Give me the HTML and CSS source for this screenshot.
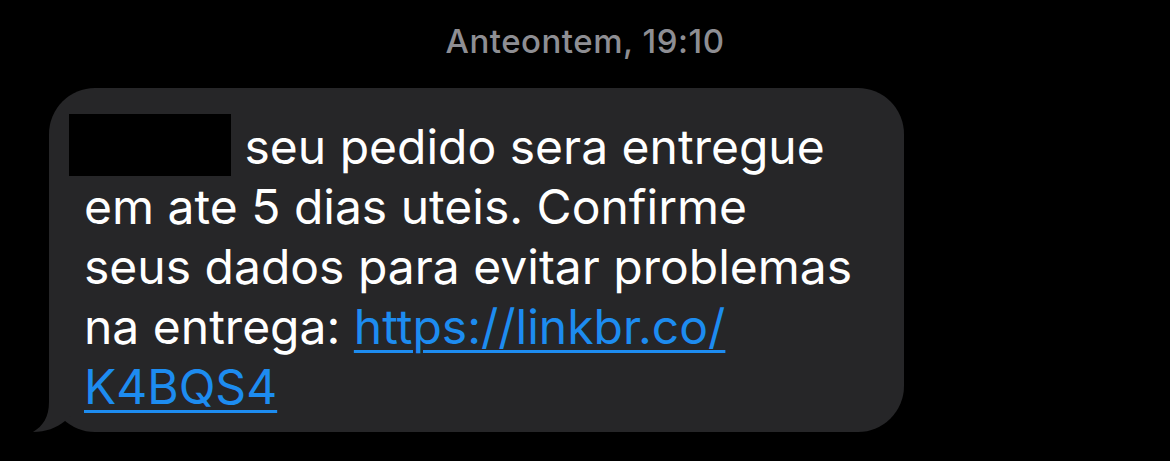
FILE: index.html
```html
<!DOCTYPE html>
<html lang="pt">
<head>
<meta charset="utf-8">
<link rel="stylesheet" href="styles.css">
</head>
<body>
<div class="thread">
  <div class="stamp">Anteontem, 19:10</div>
  <div class="row">
    <div class="bubble">
      <svg class="tail" width="40" height="50" viewBox="0 0 40 50"><path d="M17 0 L17 20 C17 35 11 44 1 50 C14 50 24 46 33 39 L40 33 L40 0 Z" fill="#262628"/></svg>
      <p class="msg"><span class="redact"></span> seu pedido sera entregue<br>em ate 5 dias uteis. Confirme<br>seus dados para evitar problemas<br>na entrega: <a class="link" href="#">https://linkbr.co/<br>K4BQS4</a></p>
    </div>
  </div>
</div>
</body>
</html>
```

FILE: styles.css
```css
html, body {
  margin: 0;
  background: #000;
}
body {
  width: 1170px;
  height: 461px;
  overflow: hidden;
  font-family: Inter, "Noto Sans", sans-serif;
}
.thread {
  display: flex;
  flex-direction: column;
}
.stamp {
  color: #8e8e93;
  font-size: 33px;
  font-weight: 500;
  letter-spacing: 0.5px;
  text-align: center;
  padding-top: 21px;
  height: 88px;
  box-sizing: border-box;
  line-height: 40px;
}
.row {
  padding-left: 49px;
}
.bubble {
  position: relative;
  width: 855px;
  height: 344px;
  box-sizing: border-box;
  background: #262628;
  border-radius: 46px;
  padding: 26px 20px 0 35px;
}
.tail {
  position: absolute;
  left: -17px;
  bottom: 0;
}
.msg {
  margin: 0;
  color: #fff;
  font-size: 48px;
  line-height: 60px;
  position: relative;
}
.redact {
  display: inline-block;
  width: 162px;
  height: 62px;
  background: #000;
  vertical-align: -12px;
  margin-left: -15px;
}
.link {
  color: #1d8cf0;
  text-decoration: underline;
  text-decoration-thickness: 3px;
  text-underline-offset: 6px;
}
```
